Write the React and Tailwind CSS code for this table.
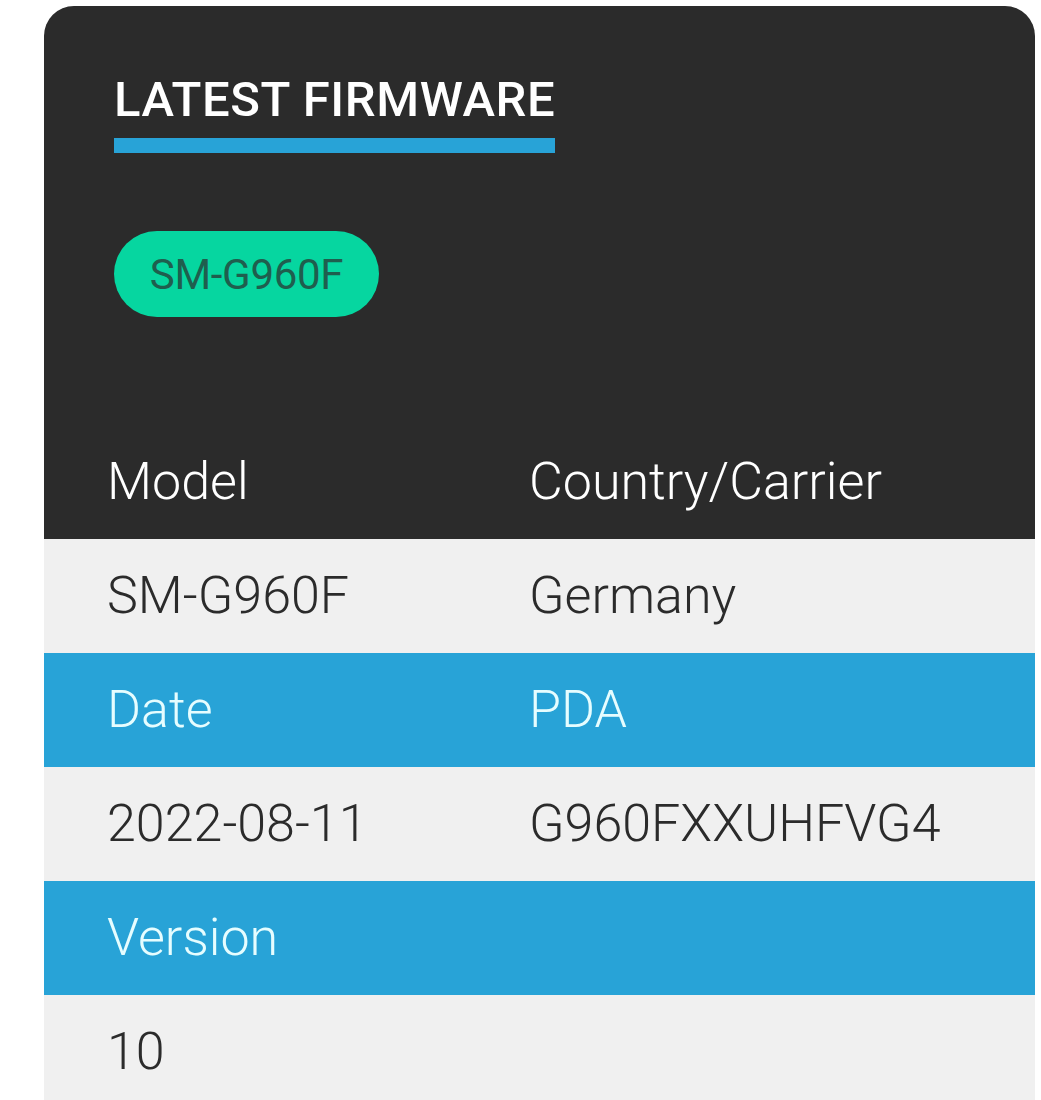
export default function App() {
  const font = { fontFamily: "Roboto, 'Noto Sans', sans-serif" };
  const rows = [
    { a: "SM-G960F", b: "Germany", type: "light" },
    { a: "Date", b: "PDA", type: "blue" },
    { a: "2022-08-11", b: "G960FXXUHFVG4", type: "light" },
    { a: "Version", b: "", type: "blue" },
    { a: "10", b: "", type: "light" },
  ];
  return (
    <div className="min-h-[1100px] bg-white pt-[6px] pl-[44px] overflow-hidden" style={font}>
      <div className="w-[991px] rounded-t-[30px] bg-[#2b2b2b] overflow-hidden">
        <div className="pl-[70px] pt-[66px]">
          <div className="inline-block border-b-[15px] border-[#28a3d7] pb-[10px] text-[49px] font-medium leading-[56px] text-white tracking-[0.6px]">
            LATEST FIRMWARE
          </div>
        </div>
        <div className="pl-[70px] pt-[78px]">
          <div className="inline-flex h-[86px] w-[265px] items-center justify-center rounded-full bg-[#06d6a0] text-[42px] font-normal text-[#1f5e4e] tracking-[-0.3px]">
            SM-G960F
          </div>
        </div>
        <div className="mt-[108px] flex h-[114px] items-center text-[52px] font-light text-white">
          <div className="w-[485px] pl-[63px]">Model</div>
          <div>Country/Carrier</div>
        </div>
        {rows.map((r, i) => (
          <div
            key={i}
            className={
              r.type === "blue"
                ? "flex h-[114px] items-center bg-[#28a3d7] text-[52px] font-light text-[#e6fdff]"
                : "flex h-[114px] items-center bg-[#f0f0f0] text-[52px] font-light text-[#2b2b2b]"
            }
          >
            <div className="w-[485px] pl-[63px]">{r.a}</div>
            <div>{r.b}</div>
          </div>
        ))}
      </div>
    </div>
  );
}
